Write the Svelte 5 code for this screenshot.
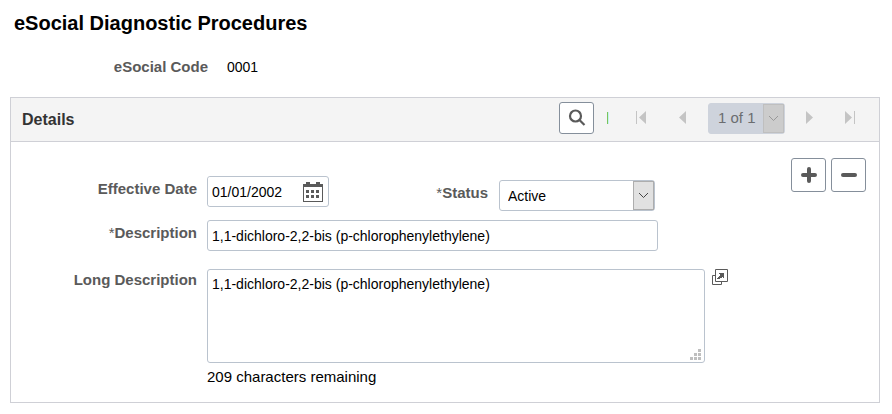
<script>
  let effectiveDate = $state('01/01/2002');
  let status = $state('Active');
  let description = $state('1,1-dichloro-2,2-bis (p-chlorophenylethylene)');
  let longDescription = $state('1,1-dichloro-2,2-bis (p-chlorophenylethylene)');

  const maxLength = 254;
  let remaining = $derived(maxLength - longDescription.length);
</script>

{#snippet chevron()}
  <span class="arrow">
    <svg width="11" height="7" viewBox="0 0 11 7" aria-hidden="true">
      <path d="M1 1l4.500 4.500L10 1" fill="none" stroke="currentColor" />
    </svg>
  </span>
{/snippet}

{#snippet navButton(label, shape)}
  <button type="button" class="nav" aria-label={label} disabled>
    <svg width="20" height="16" viewBox="0 0 20 16" aria-hidden="true">
      <path d={shape} fill="currentColor" />
    </svg>
  </button>
{/snippet}

<main>
  <h1>eSocial Diagnostic Procedures</h1>

  <div class="code-row">
    <span class="label">eSocial Code</span>
    <span>0001</span>
  </div>

  <section class="panel">
    <header>
      <h2>Details</h2>
      <div class="toolbar">
        <button type="button" class="boxed search" aria-label="Find">
          <svg width="18" height="18" viewBox="0 0 18 18" aria-hidden="true">
            <circle cx="7.500" cy="7" r="5.500" fill="none" stroke="currentColor" stroke-width="2.200" />
            <path d="M11.200 10.800L16.500 16" stroke="currentColor" stroke-width="2.200" />
          </svg>
        </button>
        <span class="separator"></span>
        {@render navButton('First', 'M3 1h1v13H3zM13 1v13L6 7.500z')}
        {@render navButton('Previous', 'M13 1v13L6 7.500z')}
        <div class="select pager">
          <select aria-label="Row" disabled>
            <option>1 of 1</option>
          </select>
          {@render chevron()}
        </div>
        {@render navButton('Next', 'M6 1v13L13 7.500z')}
        {@render navButton('Last', 'M5 1v13L12 7.500zM14 1h1v13h-1z')}
      </div>
    </header>

    <div class="body">
      <div class="form">
        <label class="label" for="effdt">Effective Date</label>
        <div class="date-row">
          <div class="date">
            <input id="effdt" type="text" bind:value={effectiveDate} />
            <button type="button" class="calendar" aria-label="Choose a date">
              <svg width="20" height="20" viewBox="0 0 20 20" aria-hidden="true">
                <path
                  d="M0 2h3V0h4v2h6V0h4v2h3v18H0zM1 5v14h18V5z"
                  fill="currentColor"
                  fill-rule="evenodd"
                />
                <path
                  d="M3 8h3v3H3zM8 8h3v3H8zM13 8h3v3h-3zM3 13h3v3H3zM8 13h3v3H8zM13 13h3v3h-3z"
                  fill="currentColor"
                />
              </svg>
            </button>
          </div>
          <div class="status">
            <label class="label" for="status"><span class="required">*</span>Status</label>
            <div class="select">
              <select id="status" bind:value={status}>
                <option>Active</option>
                <option>Inactive</option>
              </select>
              {@render chevron()}
            </div>
          </div>
        </div>

        <label class="label" for="descr"><span class="required">*</span>Description</label>
        <input id="descr" class="description" type="text" bind:value={description} />

        <label class="label long-label" for="descrlong">Long Description</label>
        <div class="long">
          <div class="textarea">
            <textarea id="descrlong" maxlength={maxLength} bind:value={longDescription}></textarea>
            <svg class="grip" width="11" height="11" viewBox="0 0 11 11" aria-hidden="true">
              <path
                d="M8 0h3v3H8zM4 4h3v3H4zM8 4h3v3H8zM0 8h3v3H0zM4 8h3v3H4zM8 8h3v3H8z"
                fill="currentColor"
              />
            </svg>
          </div>
          <button type="button" class="popup" aria-label="Open in a larger window">
            <svg width="16" height="16" viewBox="0 0 16 16" aria-hidden="true">
              <path
                d="M3.500 6.500h-3v9h9v-3M3.500 .5h12v12h-12z"
                fill="none"
                stroke="currentColor"
              />
              <path d="M7 4h5v5h-1V8h-1v1H8v1H5V9h1V8h1V7h1V5H7z" fill="currentColor" />
            </svg>
          </button>
        </div>
        <p class="remaining">{remaining} characters remaining</p>
      </div>

      <div class="actions">
        <button type="button" class="boxed" aria-label="Add a row">
          <svg width="16" height="16" viewBox="0 0 16 16" aria-hidden="true">
            <path d="M8 2v12M2 8h12" stroke="currentColor" stroke-width="4" stroke-linecap="round" />
          </svg>
        </button>
        <button type="button" class="boxed" aria-label="Delete row">
          <svg width="16" height="16" viewBox="0 0 16 16" aria-hidden="true">
            <path d="M2 8h12" stroke="currentColor" stroke-width="4" stroke-linecap="round" />
          </svg>
        </button>
      </div>
    </div>
  </section>
</main>

<style>
  :global(body) {
    background: #fff;
  }

  main {
    padding: 10px 12px 11px 10px;
    color: #000;
    font: 14px/20px 'Liberation Sans', Arial, sans-serif;
  }

  main * {
    box-sizing: border-box;
  }

  svg {
    display: block;
  }

  h1 {
    margin: 0;
    padding-left: 4px;
    font-size: 20px;
    line-height: 26px;
  }

  .label {
    color: #5a5a5a;
    font-size: 15px;
    font-weight: bold;
    line-height: 16px;
    text-align: right;
    white-space: nowrap;
  }

  .required {
    font-weight: normal;
  }

  .code-row {
    display: grid;
    grid-template-columns: 198px 1fr;
    gap: 19px;
    align-items: center;
    margin: 21px 0 20px;
  }

  .panel {
    border: 1px solid #cfd0d6;
  }

  header {
    display: flex;
    justify-content: space-between;
    align-items: center;
    padding-left: 11px;
    border-bottom: 1px solid #cfd0d6;
    background: #f4f4f4;
  }

  h2 {
    margin: 0;
    color: #333;
    font-size: 16px;
    line-height: 20px;
  }

  .toolbar {
    display: flex;
    align-items: center;
    padding: 4px 9px 7px;
  }

  button {
    display: flex;
    align-items: center;
    justify-content: center;
    padding: 0;
    border: 0;
    background: none;
    color: #5a5a5a;
    cursor: pointer;
  }

  .boxed {
    width: 35px;
    height: 34px;
    border: 1px solid #858f9b;
    border-radius: 3px;
    background: #fff;
  }

  .search {
    height: 32px;
  }

  .separator {
    width: 2px;
    height: 12px;
    margin: 0 14px 0 13px;
    border-left: 1px solid #7cc35a;
    background: #c4f2f0;
  }

  .nav {
    width: 40px;
    height: 32px;
    color: #c4c4c4;
    cursor: default;
  }

  input,
  select,
  textarea {
    height: 31px;
    margin: 0;
    padding: 0 4px;
    border: 1px solid #bac3ce;
    border-radius: 3px;
    background: #fff;
    color: #000;
    font: inherit;
  }

  .select {
    display: grid;
    width: 156px;
  }

  select {
    grid-area: 1 / 1;
    padding: 0 8px;
    appearance: none;
  }

  .arrow {
    display: flex;
    grid-area: 1 / 1;
    align-items: center;
    justify-content: center;
    justify-self: end;
    width: 21px;
    margin: 1px;
    border: 1px solid #adadad;
    background: #e1e1e1;
    color: #444;
    pointer-events: none;
  }

  .pager {
    width: 77px;
    margin: 0 5px;
  }

  .pager select {
    padding: 0 9px;
    border-color: #ced3dc;
    background: #ced3dc;
    color: #6b6d70;
    font-size: 15px;
    opacity: 1;
  }

  .pager .arrow {
    border-color: #bfbfbf;
    background: #ccc;
    color: #999;
  }

  .body {
    display: flex;
    justify-content: space-between;
    padding: 16px 13px 15px 0;
  }

  .form {
    display: grid;
    flex: 1;
    grid-template-columns: 186px minmax(0, 523px);
    column-gap: 10px;
    align-items: start;
    padding-top: 18px;
  }

  .form .label {
    padding-top: 5px;
  }

  .form .long-label {
    padding-top: 3px;
  }

  .date-row {
    display: flex;
    align-items: flex-start;
    justify-content: space-between;
    max-width: 448px;
    margin-bottom: 9px;
  }

  .date {
    display: flex;
    width: 122px;
    height: 31px;
    border: 1px solid #bac3ce;
    border-radius: 3px;
  }

  .date input {
    flex: 1;
    min-width: 0;
    height: 29px;
    border: 0;
  }

  .calendar {
    padding: 0 5px 0 0;
  }

  .status {
    display: flex;
    gap: 11px;
    padding-top: 4px;
  }

  .description {
    width: 100%;
    max-width: 451px;
    margin-bottom: 18px;
  }

  .long {
    display: flex;
    align-items: flex-start;
    gap: 7px;
  }

  .textarea {
    display: grid;
    flex: 1;
    max-width: 498px;
  }

  textarea {
    grid-area: 1 / 1;
    height: 94px;
    padding: 4px;
    resize: none;
  }

  .grip {
    grid-area: 1 / 1;
    place-self: end;
    margin: 3px 4px;
    color: #bfbfbf;
    pointer-events: none;
  }

  .remaining {
    grid-column: 2;
    margin: 4px 0 0;
    font-size: 15px;
  }

  .actions {
    display: flex;
    align-items: flex-start;
    gap: 5px;
  }
</style>
